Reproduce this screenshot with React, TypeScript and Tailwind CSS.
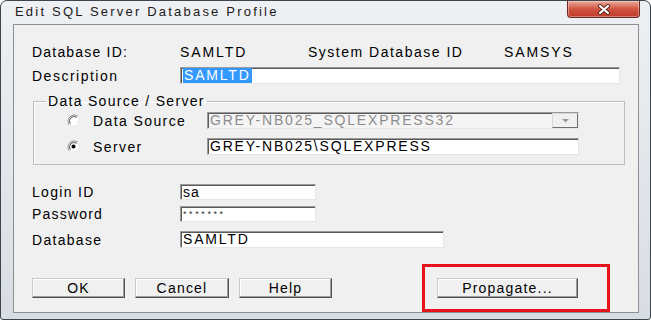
import React from "react";

const sans = "font-['Liberation_Sans',Arial,sans-serif]";

function Field({ className, children }: { className: string; children?: React.ReactNode }) {
  return (
    <div
      className={`flex items-center overflow-hidden whitespace-nowrap border border-[#9a9a9a] border-r-[#e6e6e6] border-b-[#e6e6e6] shadow-[inset_1px_1px_0_#5a5a5a] pl-[2px] text-[14px] leading-[15px] tracking-[1.8px] ${className}`}
    >
      {children}
    </div>
  );
}

function Btn({ className, label }: { className: string; label: string }) {
  return (
    <button
      className={`h-[20px] border border-[#c9c9c9] border-r-[#505050] border-b-[#505050] bg-[#f0f0f0] shadow-[inset_-1px_-1px_0_#9d9d9d,inset_1px_1px_0_#ffffff] text-[14px] leading-none tracking-[1.2px] text-black ${className}`}
    >
      {label}
    </button>
  );
}

function Radio({ checked }: { checked?: boolean }) {
  return (
    <svg width="13" height="13" viewBox="0 0 13 13">
      <circle cx="6.5" cy="6.5" r="6" fill="#ffffff" />
      <path d="M2.3 10.7 A6 6 0 0 1 10.7 2.3" fill="none" stroke="#9a9a9a" strokeWidth="1.2" />
      <path d="M3.3 9.7 A4.6 4.6 0 0 1 9.7 3.3" fill="none" stroke="#505050" strokeWidth="1" />
      <path d="M10.7 2.3 A6 6 0 0 1 2.3 10.7" fill="none" stroke="#e2e2e2" strokeWidth="1" />
      {checked && <circle cx="6.5" cy="6.5" r="2" fill="#000000" />}
    </svg>
  );
}

export default function App() {
  return (
    <div
      className={`${sans} flex h-[320px] w-[651px] flex-col overflow-hidden rounded-t-[7px] rounded-b-[3px] border border-[#3e444c] bg-gradient-to-b from-[#eef0f3] via-[#e3e7eb] to-[#d8dde3] text-black`}
    >
      {/* Title bar */}
      <div className="flex h-[23px] shrink-0 items-start justify-between">
        <span className="pl-[14px] pt-[3px] text-[13px] leading-[16px] tracking-[2.2px] text-[#1a1a1a]">
          Edit SQL Server Database Profile
        </span>
        <div className="mr-[10px] flex h-[17px] w-[73px] items-center justify-center rounded-b-[4px] border border-t-0 border-[#6e2a22] bg-gradient-to-b from-[#e9a99c] via-[#d0543f] to-[#c0392a] shadow-[inset_0_0_0_1px_rgba(255,255,255,0.35)]">
          <svg width="16" height="11" viewBox="0 0 16 11">
            <path d="M4 2 L12 9 M12 2 L4 9" stroke="#5b2219" strokeWidth="4" strokeLinecap="round" />
            <path d="M4 2 L12 9 M12 2 L4 9" stroke="#ffffff" strokeWidth="2.2" strokeLinecap="round" />
          </svg>
        </div>
      </div>

      {/* Client area */}
      <div className="mb-[7px] ml-[12px] mr-[11px] flex-1 border border-[#8a8f96] bg-[#f0f0f0] pl-[18px] pt-[19px]">
        <div className="flex h-[16px] items-center whitespace-nowrap text-[14px] leading-none">
          <span className="w-[148px] tracking-[1.2px]">Database ID:</span>
          <span className="w-[128px] tracking-[1.9px]">SAMLTD</span>
          <span className="w-[196px] tracking-[1.5px]">System Database ID</span>
          <span className="tracking-[1.9px]">SAMSYS</span>
        </div>

        <div className="mt-[7px] flex items-center">
          <span className="w-[148px] text-[14px] leading-none tracking-[1.5px]">Description</span>
          <Field className="h-[17px] w-[440px] bg-white">
            <span className="bg-[#3399ff] px-[1px] text-white">SAMLTD</span>
          </Field>
        </div>

        <fieldset className="ml-[1px] mt-[9px] w-[592px] border border-[#bdbdbd] pb-[9px] shadow-[inset_1px_1px_0_#ffffff]">
          <legend className="ml-[12px] px-[2px] text-[14px] leading-[16px] tracking-[1.3px]">
            Data Source / Server
          </legend>
          <div className="mt-[3px] flex h-[17px] items-center pl-[33px]">
            <Radio />
            <span className="ml-[13px] w-[114px] text-[14px] leading-none tracking-[1.4px]">Data Source</span>
            <Field className="h-[17px] w-[372px] bg-[#f4f4f4] text-[#8d8d8d]">
              <span>GREY-NB025_SQLEXPRESS32</span>
              <div className="ml-auto flex h-[15px] w-[26px] shrink-0 items-center justify-center border border-[#d8d8d8] border-r-[#6e6e6e] border-b-[#6e6e6e] bg-[#f0f0f0]">
                <svg width="9" height="5" viewBox="0 0 9 5">
                  <path d="M1 1 L8 1 L4.5 4.5 Z" fill="#9a9a9a" />
                </svg>
              </div>
            </Field>
          </div>
          <div className="mt-[9px] flex h-[17px] items-center pl-[33px]">
            <Radio checked />
            <span className="ml-[13px] w-[114px] text-[14px] leading-none tracking-[1.4px]">Server</span>
            <Field className="h-[17px] w-[372px] bg-white">
              <span>GREY-NB025\SQLEXPRESS</span>
            </Field>
          </div>
        </fieldset>

        <div className="mt-[19px] flex items-center">
          <span className="w-[148px] text-[14px] leading-none tracking-[1.3px]">Login ID</span>
          <Field className="h-[16px] w-[136px] bg-white">
            <span className="tracking-[1px]">sa</span>
          </Field>
        </div>
        <div className="mt-[6px] flex items-center">
          <span className="w-[148px] text-[14px] leading-none tracking-[1.2px]">Password</span>
          <Field className="h-[16px] w-[136px] bg-white">
            <span className="text-[9px] tracking-[2.6px] text-[#333333]">*******</span>
          </Field>
        </div>
        <div className="mt-[9px] flex items-center">
          <span className="w-[148px] text-[14px] leading-none tracking-[1.3px]">Database</span>
          <Field className="h-[17px] w-[264px] bg-white">
            <span>SAMLTD</span>
          </Field>
        </div>

        <div className="mt-[16px] flex items-center">
          <Btn className="w-[93px]" label="OK" />
          <Btn className="ml-[10px] w-[94px]" label="Cancel" />
          <Btn className="ml-[10px] w-[93px]" label="Help" />
          <div className="ml-[90px] border-[3px] border-[#e8101a] pb-[9px] pl-[12px] pr-[29px] pt-[9px]">
            <Btn className="w-[141px]" label="Propagate..." />
          </div>
        </div>
      </div>
    </div>
  );
}
